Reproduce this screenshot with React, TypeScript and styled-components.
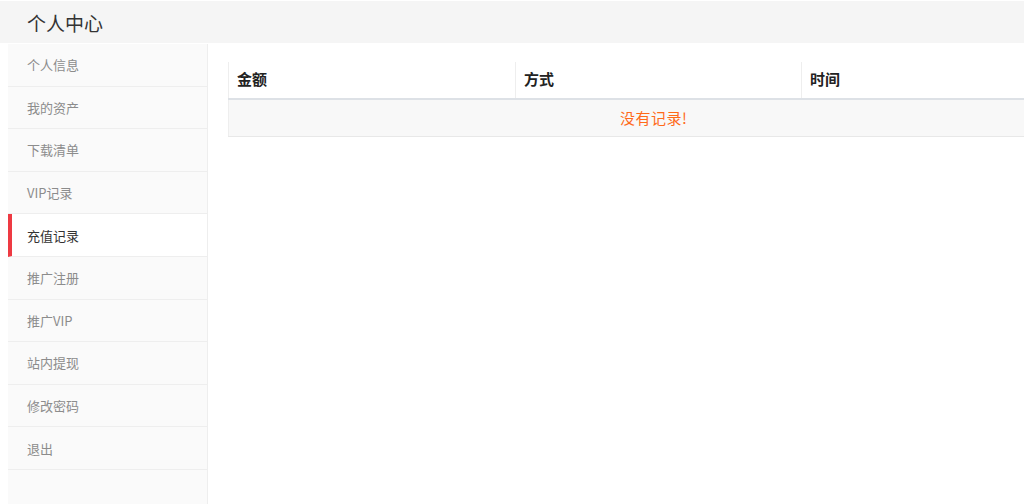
import React from 'react'
import styled, { createGlobalStyle } from 'styled-components'

const GlobalStyle = createGlobalStyle`
  html, body {
    margin: 0;
    padding: 0;
    background: #fff;
    font-family: "Noto Sans CJK SC", "Noto Sans", "Liberation Sans", sans-serif;
    overflow: hidden;
  }
`;

const menu = ['个人信息', '我的资产', '下载清单', 'VIP记录', '充值记录', '推广注册', '推广VIP', '站内提现', '修改密码', '退出'];
const active = '充值记录';

const App = () => {
  return (
    <Page>
      <GlobalStyle />
      <TopBar>
        <div className="title">个人中心</div>
      </TopBar>
      <Main>
        <SideMenu>
          {menu.map((m) => (
            <MenuItem key={m} $active={m === active}>{m}</MenuItem>
          ))}
        </SideMenu>
        <Content>
          <RecordTable>
            <colgroup>
              <col style={{ width: 287 }} />
              <col style={{ width: 286 }} />
              <col style={{ width: 277 }} />
            </colgroup>
            <thead>
              <tr>
                <th>金额</th>
                <th>方式</th>
                <th>时间</th>
              </tr>
            </thead>
            <tbody>
              <tr>
                <td colSpan={3} className="empty">没有记录!</td>
              </tr>
            </tbody>
          </RecordTable>
        </Content>
      </Main>
    </Page>
  );
};

export default App;

const Page = styled.div`
  width: 1024px;
  height: 504px;
  padding-top: 1px;
  box-sizing: border-box;
  display: flex;
  flex-direction: column;
`;

const TopBar = styled.div`
  height: 42px;
  flex-shrink: 0;
  background-color: #f5f5f5;
  display: flex;
  align-items: center;
  padding-left: 27px;
  & > .title {
    font-size: 19px;
    color: #333;
    line-height: 1;
    margin-top: 1px;
  }
`;

const Main = styled.div`
  flex: 1;
  display: flex;
  flex-direction: row;
  padding-left: 8px;
  padding-top: 1px;
  min-height: 0;
`;

const SideMenu = styled.div`
  width: 199px;
  background-color: #fafafa;
  border-right: 1px solid #eeeeee;
  display: flex;
  flex-direction: column;
`;

const MenuItem = styled.div<{ $active?: boolean }>`
  height: 42.6px;
  box-sizing: border-box;
  display: flex;
  align-items: center;
  padding-left: ${(p) => (p.$active ? '15px' : '19px')};
  font-size: 13px;
  color: ${(p) => (p.$active ? '#333' : '#8c8c8c')};
  background-color: ${(p) => (p.$active ? '#fff' : 'transparent')};
  border-left: ${(p) => (p.$active ? '4px solid #ee3a43' : 'none')};
  border-bottom: 1px solid #eeeeee;
`;

const Content = styled.div`
  flex: 1;
  padding: 18px 0 0 20px;
  overflow: hidden;
`;

const RecordTable = styled.table`
  width: 850px;
  border-collapse: collapse;
  table-layout: fixed;
  border-left: 1px solid #eeeeee;
  & th {
    height: 33px;
    text-align: left;
    padding: 0 0 3px 8px;
    font-size: 15px;
    font-weight: bold;
    color: #222;
    border-left: 1px solid #eeeeee;
    border-bottom: 2px solid #dde1e6;
  }
  & th:first-child {
    border-left: none;
  }
  & td.empty {
    height: 34px;
    text-align: center;
    font-size: 15px;
    letter-spacing: 0.5px;
    color: #ff6a1a;
    background-color: #f8f8f8;
    border-bottom: 1px solid #e8e8e8;
    padding: 0 0 2px 0;
  }
`;
